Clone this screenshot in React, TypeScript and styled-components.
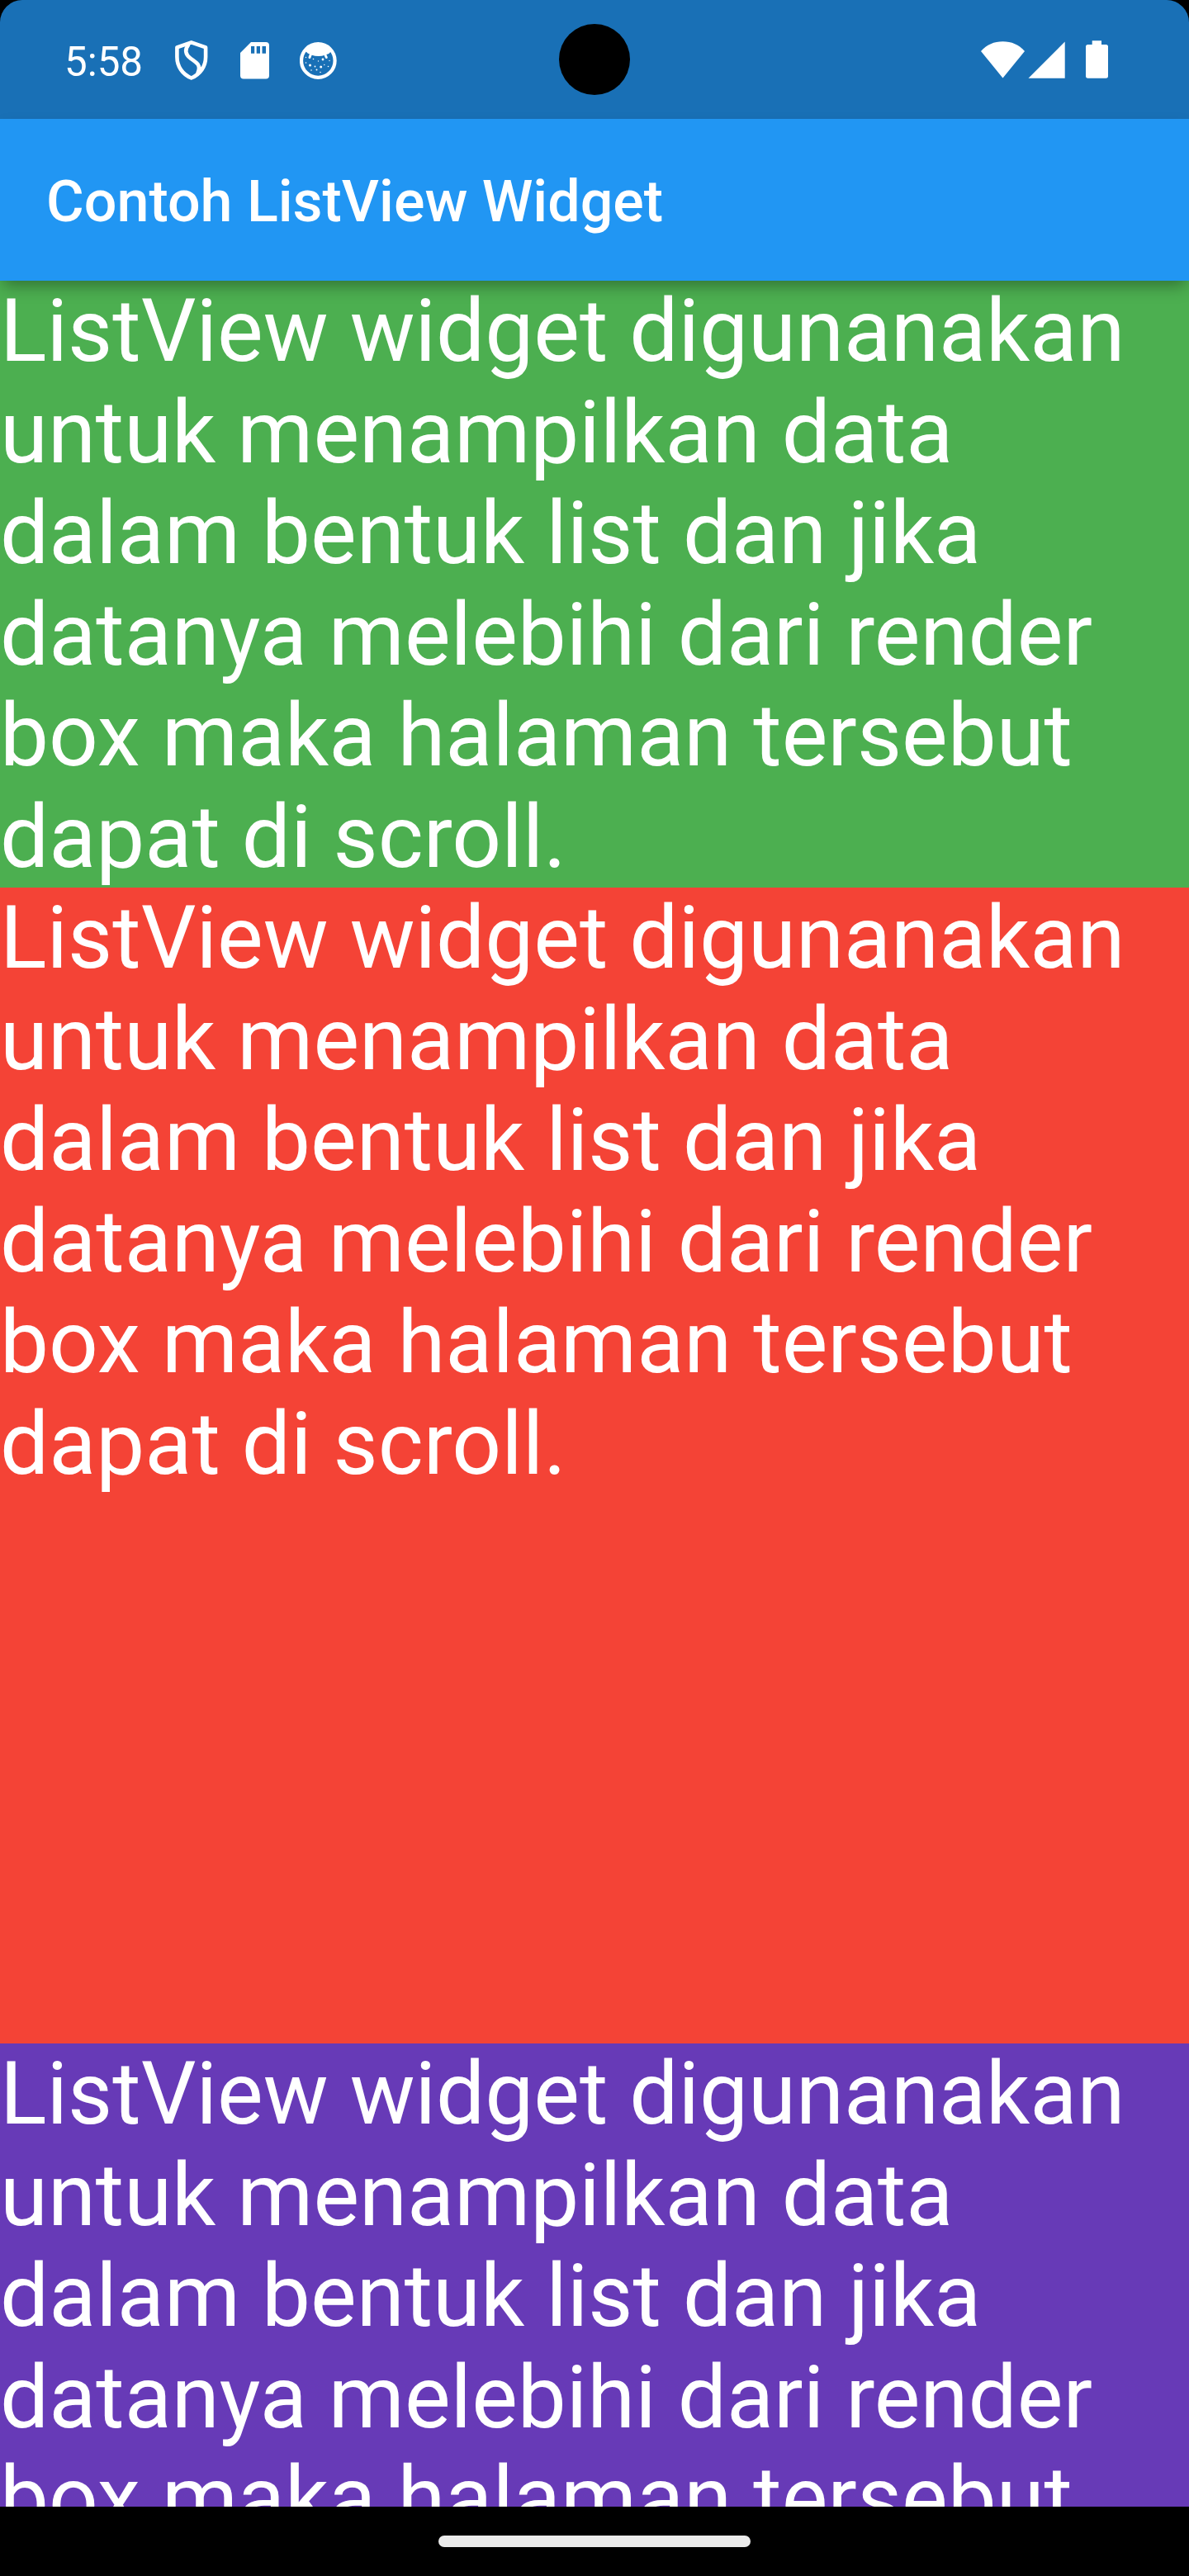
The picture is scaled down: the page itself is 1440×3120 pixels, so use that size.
import React from 'react';
import styled, { createGlobalStyle } from 'styled-components';

const GlobalStyle = createGlobalStyle`
  *, *::before, *::after { box-sizing: border-box; }
  body { margin: 0; background: #000; font-family: Roboto, sans-serif; color: #fff; }
`;

const Screen = styled.div`
  position: relative;
  display: flex;
  flex-direction: column;
  width: 1440px;
  height: 3120px;
  overflow: hidden;
  background: #000;
`;

const StatusBar = styled.header`
  display: flex;
  align-items: center;
  justify-content: space-between;
  flex: none;
  height: 144px;
  padding: 0 98px 0 78px;
  background: #1970b6;
  border-radius: 27px 27px 0 0;
`;

const StatusGroup = styled.div`
  display: flex;
  align-items: center;
`;

const Clock = styled.time`
  width: 134px;
  font-size: 49.3px;
  line-height: 58px;
  padding-top: 5px;
`;

const Glyph = styled.svg<{ $gap?: number; $drop?: number }>`
  display: block;
  flex: none;
  margin-left: ${(p) => p.$gap ?? 0}px;
  margin-top: ${(p) => p.$drop ?? 0}px;
  fill: #fff;
`;

const Camera = styled.div`
  position: absolute;
  top: 29px;
  left: 677px;
  width: 86px;
  height: 86px;
  border-radius: 50%;
  background: #000;
`;

const AppBar = styled.div`
  position: relative;
  z-index: 1;
  display: flex;
  align-items: center;
  flex: none;
  height: 196px;
  padding: 4px 56px 0;
  background: #2196f3;
  box-shadow: 0 10px 18px -4px rgba(0, 0, 0, 0.35);
`;

const Title = styled.h1`
  margin: 0;
  font-size: 70px;
  font-weight: 500;
  line-height: 82px;
  white-space: nowrap;
`;

const List = styled.main`
  flex: 1;
  min-height: 0;
  overflow: hidden;
`;

const Item = styled.section<{ $color: string; $height: number }>`
  height: ${(p) => p.$height}px;
  padding-top: 1px;
  background: ${(p) => p.$color};
`;

const Copy = styled.p`
  margin: 0;
  font-size: 105px;
  line-height: 122.5px;
`;

const NavBar = styled.footer`
  position: relative;
  display: flex;
  align-items: center;
  justify-content: center;
  flex: none;
  height: 84px;
  background: #000;
`;

const Handle = styled.div`
  width: 378px;
  height: 14px;
  border-radius: 7px;
  background: #ebebeb;
`;

const ShieldIcon = () => (
  <Glyph width="40" height="48" viewBox="0 0 40 48" $drop={2}>
    <g fill="none" stroke="#fff" strokeWidth="4.6" strokeLinejoin="round" strokeLinecap="round">
      <path d="M19.7 2.4 L37.1 8.4 V20 C37.1 31.5 30.5 41 19.7 45.5 C9 41 2.4 31.5 2.4 20 V8.4 Z" />
      <path d="M16 5.5 C11.500 11 12.500 17 18.500 21.500 C26 26.500 32 30 27.500 39.500" />
    </g>
    <path d="M29 29 L31.500 32.500 L34.500 28 L34 35 L28 41 Z" />
  </Glyph>
);

const SdCardIcon = () => (
  <Glyph width="35" height="45" viewBox="0 0 35 45" $gap={39} $drop={2}>
    <path
      fillRule="evenodd"
      d="M13 0 H31 Q35 0 35 4 V40.5 Q35 44.500 31 44.500 H4 Q0 44.500 0 40.500 V13 Z M13 5 V13.700 H17.200 V5 Z M19.700 5 V13.700 H24 V5 Z M26.500 5 V13.700 H31 V5 Z"
    />
  </Glyph>
);

const specks: [number, number, number][] = [
  [7.5, 18.5, 0.7], [16.5, 20.5, 0.8], [22.5, 23, 0.7], [28, 21, 1.4],
  [36, 22.5, 0.7], [7.5, 25, 0.8], [12.5, 28, 1.5], [18.5, 29.5, 0.9],
  [25.7, 30, 1.5], [29.8, 27.5, 0.7], [34.5, 29.5, 0.8], [14, 34, 0.8],
  [20.5, 33.5, 1], [25, 36.5, 0.8],
];

const FaceIcon = () => (
  <Glyph width="46" height="46" viewBox="0 0 46 46" $gap={37} $drop={3}>
    <circle cx="22.3" cy="22.5" r="20.3" fill="none" stroke="#fff" strokeWidth="4.2" />
    <path d="M5.500 9.500 Q12 1 22.500 1 Q33 1 39.500 9.500 L35.300 14 L31 15.500 Q23 18.500 14 15.500 L9.700 13.500 Z" />
    <path d="M13.500 14.500 L12 18.500 M30.500 14.500 L32.300 18.500" stroke="#fff" strokeWidth="3" strokeLinecap="round" />
    {specks.map(([cx, cy, r]) => (
      <circle key={`${cx}-${cy}`} cx={cx} cy={cy} r={r} />
    ))}
  </Glyph>
);

const WifiIcon = () => (
  <Glyph width="53" height="46" viewBox="0 0 53 46">
    <path d="M0 13 C7 5 16 1.200 26.500 1.200 C37 1.200 46 5 53 13 L26.500 45.500 Z" />
  </Glyph>
);

const SignalIcon = () => (
  <Glyph width="45" height="46" viewBox="0 0 45 46" $gap={4}>
    <path d="M0.500 45.700 L44.700 1.500 V45.700 Z" />
  </Glyph>
);

const BatteryIcon = () => (
  <Glyph width="27" height="46" viewBox="0 0 27 46" $gap={25}>
    <path d="M7.700 0.200 H19 V5 H24.500 Q27 5 27 7.500 V43 Q27 45.700 24.500 45.700 H2.500 Q0 45.700 0 43 V7.500 Q0 5 2.500 5 H7.700 Z" />
  </Glyph>
);

const message =
  'ListView widget digunanakan untuk menampilkan data dalam bentuk list dan jika datanya melebihi dari render box maka halaman tersebut dapat di scroll.';

const items = [
  { color: '#4caf50', height: 735 },
  { color: '#f44336', height: 1400 },
  { color: '#673ab7', height: 1400 },
];

export default function App() {
  return (
    <>
      <GlobalStyle />
      <Screen>
        <StatusBar>
          <StatusGroup>
            <Clock>5:58</Clock>
            <ShieldIcon />
            <SdCardIcon />
            <FaceIcon />
          </StatusGroup>
          <StatusGroup>
            <WifiIcon />
            <SignalIcon />
            <BatteryIcon />
          </StatusGroup>
        </StatusBar>
        <Camera />
        <AppBar>
          <Title>Contoh ListView Widget</Title>
        </AppBar>
        <List>
          {items.map((item) => (
            <Item key={item.color} $color={item.color} $height={item.height}>
              <Copy>{message}</Copy>
            </Item>
          ))}
        </List>
        <NavBar>
          <Handle />
        </NavBar>
      </Screen>
    </>
  );
}
